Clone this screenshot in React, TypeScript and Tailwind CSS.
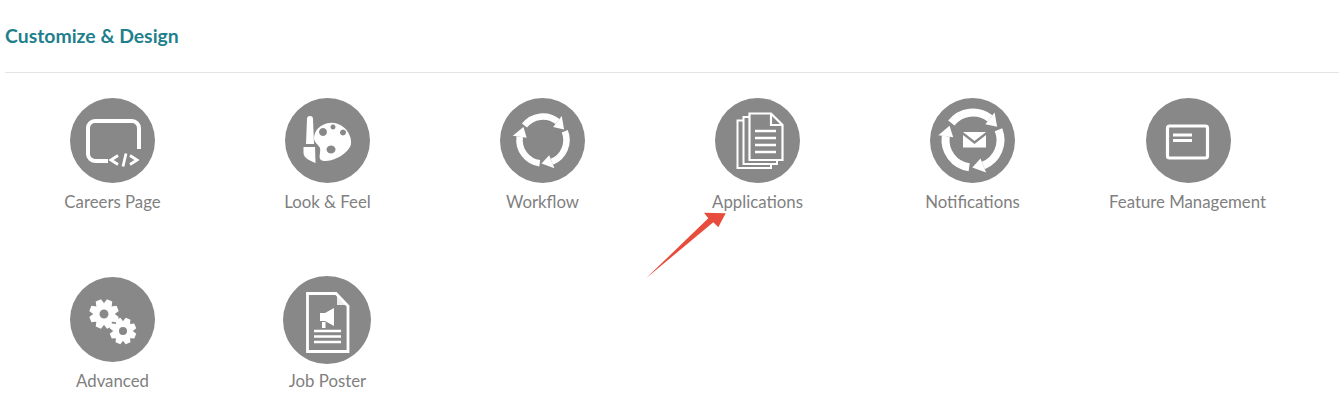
import React from "react";

const stroke = { fill: "none", stroke: "#fff", strokeLinecap: "butt" as const };

// clockwise arc with an arrow head on its end, angles in degrees from 12 o'clock
function arcArrow(cx: number, cy: number, r: number, from: number, to: number, head: number) {
  const pt = (a: number, rad: number) => {
    const t = ((a - 90) * Math.PI) / 180;
    return [cx + rad * Math.cos(t), cy + rad * Math.sin(t)];
  };
  const [x1, y1] = pt(from, r);
  const [x2, y2] = pt(to, r);
  const large = to - from > 180 ? 1 : 0;
  const [ax, ay] = pt(to, r - head);
  const [bx, by] = pt(to, r + head);
  const [tx, ty] = pt(to + (head * 1.5 * 180) / (Math.PI * r), r);
  return {
    arc: `M${x1} ${y1}A${r} ${r} 0 ${large} 1 ${x2} ${y2}`,
    tip: `M${ax} ${ay}L${bx} ${by}L${tx} ${ty}Z`,
  };
}

function gearPath(cx: number, cy: number, outer: number, inner: number, hole: number) {
  const teeth = 8;
  let d = "";
  for (let i = 0; i < teeth; i++) {
    const base = (i * 360) / teeth + 22.5;
    [[-24, inner], [-11, outer], [11, outer], [24, inner]].forEach(([off, rad], j) => {
      const t = ((base + off) * Math.PI) / 180;
      d += `${i === 0 && j === 0 ? "M" : "L"}${cx + rad * Math.cos(t)} ${cy + rad * Math.sin(t)}`;
    });
  }
  d += `ZM${cx + hole} ${cy}A${hole} ${hole} 0 1 0 ${cx - hole} ${cy}A${hole} ${hole} 0 1 0 ${cx + hole} ${cy}Z`;
  return d;
}

const Cycle = ({ r, width, head }: { r: number; width: number; head: number }) => (
  <>
    {[
      [-52, 38],
      [68, 158],
      [188, 278],
    ].map(([a, b]) => {
      const p = arcArrow(43, 42, r, a, b, head);
      return (
        <g key={a}>
          <path d={p.arc} {...stroke} strokeWidth={width} />
          <path d={p.tip} fill="#fff" />
        </g>
      );
    })}
  </>
);

const CareersIcon = () => (
  <>
    <path d="M38 63H25a7 7 0 0 1-7-7V30a7 7 0 0 1 7-7h37a7 7 0 0 1 7 7v21" {...stroke} strokeWidth={4} />
    <path d="M48 57.500l-7 4.500 7 4.500M60 57.500l7 4.500-7 4.500M56 55.500l-3 13" {...stroke} strokeWidth={2.800} />
  </>
);

const PaletteIcon = () => (
  <>
    <path d="M22 21a3 3 0 0 1 6 0l1 25h-8z" fill="#fff" />
    <path d="M18.500 49h11.500l.5 16c-5-2-12-5-12-10z" fill="#fff" />
    <path
      fillRule="evenodd"
      fill="#fff"
      d="M31 33c5-7 14-10 22-7 9 3 14 13 13 20-1 5-7 11-14 14-6 3-13 4-16 2-3-2 0-8-1-12-1-3-6-5-6-10 0-3 1-5 2-7zM38 30a4 4 0 1 0 .01 0zM48 26.500a2.500 2.500 0 1 0 .01 0zM58 31.500a3 3 0 1 0 .01 0zM46 47.500a4.500 4 0 1 0 .01 0z"
    />
  </>
);

const AppsIcon = () => (
  <>
    <path d="M34.500 15.500H56L67.500 27V62H34.500z" {...stroke} strokeWidth={2.200} />
    <path d="M56 15.500V27H67.500" {...stroke} strokeWidth={2.200} />
    <path d="M34 19H28.500V66H62V62.500M28 22.500H22.500V70H56V66.500" {...stroke} strokeWidth={2} />
    <path d="M40 33H61M40 40H61M40 47H61M40 54H61" {...stroke} strokeWidth={2.300} />
  </>
);

const NotifyIcon = () => (
  <>
    <Cycle r={27.500} width={8} head={7.500} />
    <path d="M33 34H56L44.500 43z" fill="#fff" />
    <path d="M33 37L44.500 46 56 37V49.500H33z" fill="#fff" />
  </>
);

const FeatureIcon = () => (
  <>
    <rect x="21.500" y="28" width="40" height="32" rx="2" {...stroke} strokeWidth={3.200} />
    <path d="M27 37H46M27 42.500H46" {...stroke} strokeWidth={2.800} />
  </>
);

const GearsIcon = () => (
  <>
    <path d={gearPath(34, 37, 15, 10.500, 4.500)} fill="#fff" fillRule="evenodd" />
    <path d={gearPath(53, 54, 13.500, 9.500, 4)} fill="#fff" fillRule="evenodd" />
  </>
);

const PosterIcon = () => (
  <>
    <path d="M24.500 17.500H53L65 30V75.500H24.500z" {...stroke} strokeWidth={2.800} />
    <path d="M54 19V29H64z" fill="#fff" opacity="0.85" />
    <path d="M37 37H42L51 32V50L42 45H37zM39 46H42.500V52H39z" fill="#fff" />
    <path d="M31 55H58M31 60.500H58M31 66H58" {...stroke} strokeWidth={2.300} />
  </>
);

const items = [
  { label: "Careers Page", icon: <CareersIcon />, circle: "" },
  { label: "Look & Feel", icon: <PaletteIcon />, circle: "" },
  { label: "Workflow", icon: <Cycle r={23.500} width={6.500} head={7} />, circle: "" },
  { label: "Applications", icon: <AppsIcon />, circle: "" },
  { label: "Notifications", icon: <NotifyIcon />, circle: "" },
  { label: "Feature Management", icon: <FeatureIcon />, circle: "ml-[1px]" },
  { label: "Advanced", icon: <GearsIcon />, circle: "" },
  { label: "Job Poster", icon: <PosterIcon />, big: true, circle: "ml-[-1px]" },
];

export default function App() {
  return (
    <div className="relative h-[412px] w-[1341px] overflow-hidden bg-white px-[5px] font-['Lato',sans-serif]">
      <h2 className="flex h-[72px] items-center text-[19.400px] font-bold text-[#1f7f8c]">Customize &amp; Design</h2>
      <div className="mr-[-3px] border-t border-[#e4e4e4]" />
      <div className="mt-[25px] grid grid-cols-[repeat(6,215px)] auto-rows-[179px]">
        {items.map((item) => (
          <div key={item.label} className="flex flex-col items-center">
            <div
              className={
                (item.big
                  ? "mt-[-1px] mb-[-2px] h-[88px] w-[88px] rounded-full bg-[#888888] "
                  : "h-[85px] w-[85px] rounded-full bg-[#888888] ") + item.circle
              }
            >
              <svg viewBox={item.big ? "0 0 88 88" : "0 0 85 85"} className="h-full w-full">
                {item.icon}
              </svg>
            </div>
            <span className="mt-[9px] text-[16.800px] leading-[20px] text-[#80807f]">{item.label}</span>
          </div>
        ))}
      </div>
      {/* red annotation arrow */}
      <svg className="absolute left-[640px] top-[205px] h-[80px] w-[95px]" viewBox="640 205 95 80">
        <path d="M646 278.300L708.300 218.300 704 212.700 725.700 213.300 718.300 227.300 713.300 222.300Z" fill="#e74c3c" />
      </svg>
    </div>
  );
}
